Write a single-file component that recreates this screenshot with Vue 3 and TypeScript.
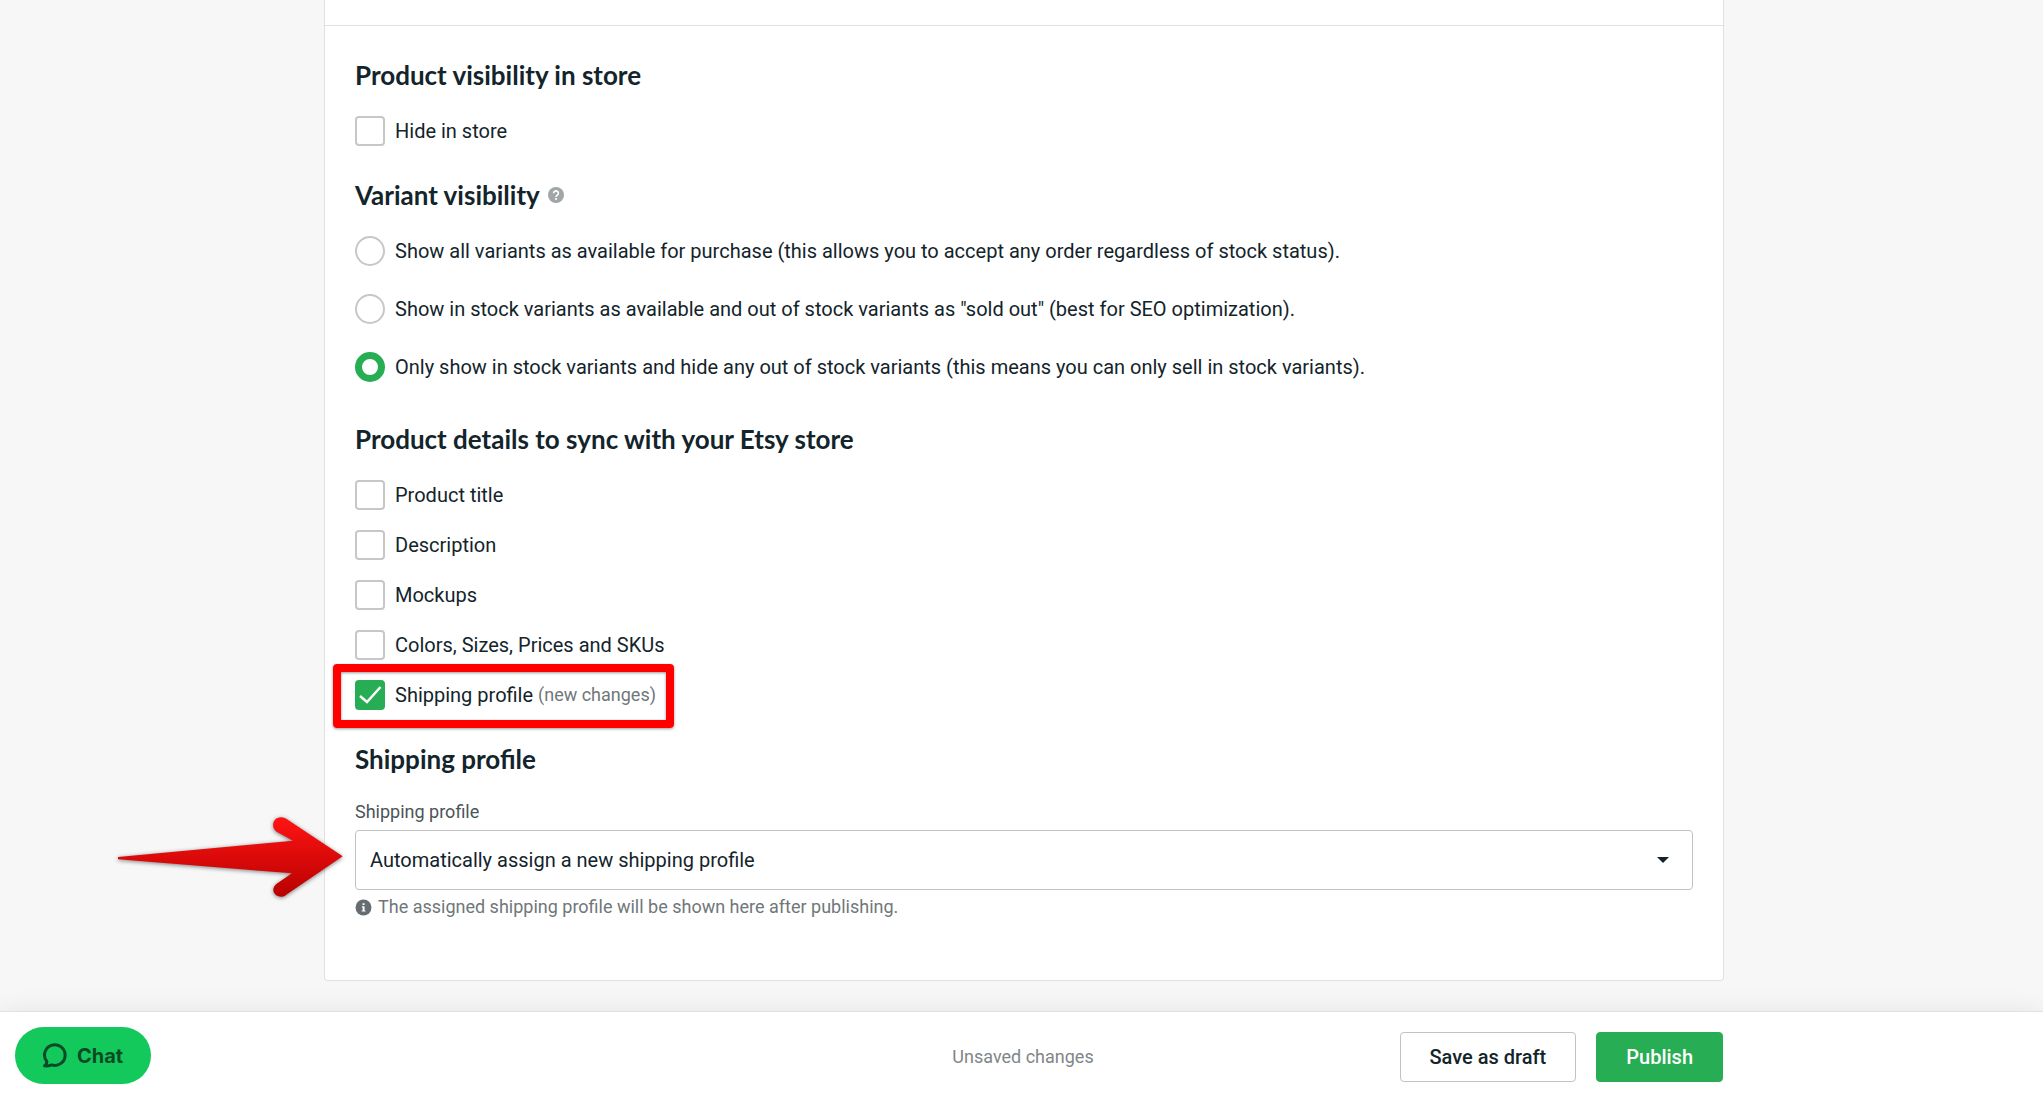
<script setup lang="ts">
import { ref } from 'vue'

interface SyncOption {
  id: string
  label: string
}

interface VisibilityOption {
  value: string
  label: string
}

const hidden = ref(false)
const visibility = ref('in-stock')
const synced = ref<string[]>([])
const shippingSynced = ref(true)
const profile = ref('auto')

const visibilityOptions: VisibilityOption[] = [
  {
    value: 'all',
    label: 'Show all variants as available for purchase (this allows you to accept any order regardless of stock status).',
  },
  {
    value: 'sold-out',
    label: 'Show in stock variants as available and out of stock variants as "sold out" (best for SEO optimization).',
  },
  {
    value: 'in-stock',
    label: 'Only show in stock variants and hide any out of stock variants (this means you can only sell in stock variants).',
  },
]

const syncOptions: SyncOption[] = [
  { id: 'title', label: 'Product title' },
  { id: 'description', label: 'Description' },
  { id: 'mockups', label: 'Mockups' },
  { id: 'variants', label: 'Colors, Sizes, Prices and SKUs' },
]
</script>

<template>
  <div class="page">
    <main class="content">
      <div class="card">
        <div class="card-head"></div>
        <div class="card-body">
          <section>
            <h2>Product visibility in store</h2>
            <label class="option">
              <input v-model="hidden" type="checkbox" class="check" />
              <span>Hide in store</span>
            </label>
          </section>

          <section>
            <h2 id="variant-heading">
              Variant visibility
              <svg class="help" viewBox="0 0 16 16" aria-hidden="true">
                <circle cx="8" cy="8" r="8" fill="#a1a6a7" />
                <path d="M5.600 6.200a2.400 2.300 0 1 1 3.700 1.900C8.400 8.700 8 9 8 9.900" fill="none" stroke="#fff" stroke-width="1.700" />
                <rect x="7.100" y="11" width="1.800" height="1.800" fill="#fff" />
              </svg>
            </h2>
            <div class="radios" role="radiogroup" aria-labelledby="variant-heading">
              <label v-for="o in visibilityOptions" :key="o.value" class="option">
                <input v-model="visibility" type="radio" name="visibility" :value="o.value" class="radio" />
                <span>{{ o.label }}</span>
              </label>
            </div>
          </section>

          <section class="after-radios">
            <h2>Product details to sync with your Etsy store</h2>
            <div class="checks">
              <label v-for="o in syncOptions" :key="o.id" class="option">
                <input v-model="synced" type="checkbox" :value="o.id" class="check" />
                <span>{{ o.label }}</span>
              </label>
              <div class="marked">
                <label class="option">
                  <input v-model="shippingSynced" type="checkbox" class="check" />
                  <span>Shipping profile <small>(new changes)</small></span>
                </label>
                <div class="highlight"></div>
              </div>
            </div>
          </section>

          <section>
            <h2>Shipping profile</h2>
            <label class="field-label" for="shipping-profile">Shipping profile</label>
            <div class="select-box">
              <select id="shipping-profile" v-model="profile">
                <option value="auto">Automatically assign a new shipping profile</option>
              </select>
              <svg class="caret" viewBox="0 0 12 6" aria-hidden="true"><path d="M0 0h12L6 6z" fill="#13242b" /></svg>
              <svg class="arrow" viewBox="0 0 228 84" aria-hidden="true">
                <defs>
                  <linearGradient id="arrow-fill" x1="0" y1="0" x2="0" y2="1">
                    <stop offset="0" stop-color="#ff1414" />
                    <stop offset="1" stop-color="#b80000" />
                  </linearGradient>
                </defs>
                <path
                  d="M1 41L176 24.700L160 16C153 11 156 1.300 164 1.300C167 1.300 168.500 2.300 170 3.300L225.700 40.300L170.300 78C168.500 79.500 167 80.700 164.500 80.700C156 80.700 153.500 72 160 67.500L175 57.300L1 43.300Z"
                  fill="url(#arrow-fill)"
                />
              </svg>
            </div>
            <p class="hint">
              <svg viewBox="0 0 16 16" aria-hidden="true">
                <circle cx="8" cy="8" r="7.500" fill="#656d71" />
                <path d="M7.100 4h1.900v1.700h-1.900zM6.500 6.900h2.500v3.900h.8v1H6.300v-1h.9V7.900h-.7z" fill="#fff" />
              </svg>
              <span>The assigned shipping profile will be shown here after publishing.</span>
            </p>
          </section>
        </div>
      </div>
    </main>

    <footer class="bar">
      <div class="bar-inner">
        <span></span>
        <span class="status">Unsaved changes</span>
        <div class="actions">
          <button type="button" class="btn">Save as draft</button>
          <button type="button" class="btn primary">Publish</button>
        </div>
      </div>
    </footer>

    <button type="button" class="chat">
      <svg viewBox="0 0 26 26" aria-hidden="true">
        <path
          d="M2.500 22.800C4 21.500 5 20.300 4.900 18.700A10.300 10.300 0 1 1 9.600 21.900C7.500 22.800 5 23.400 2.500 22.800Z"
          fill="none"
          stroke="#0b4a26"
          stroke-width="3"
          stroke-linejoin="round"
        />
      </svg>
      <span>Chat</span>
    </button>
  </div>
</template>

<style>
body {
  margin: 0;
  background: #f7f7f7;
}
</style>

<style scoped>
.page {
  position: relative;
  display: flex;
  flex-direction: column;
  min-height: 100vh;
  overflow: hidden;
  color: #13242b;
  font: 20px/30px Roboto, sans-serif;
}

.content {
  padding: 0 20px 30px 25px;
}

.card {
  box-sizing: border-box;
  max-width: 1400px;
  margin: 0 auto;
  background: #fff;
  border: 1px solid #e0e2e2;
  border-top: 0;
  border-radius: 0 0 4px 4px;
}

.card-head {
  height: 25px;
  border-bottom: 1px solid #e0e2e2;
}

.card-body {
  padding: 34px 30px 61px;
}

section + section {
  margin-top: 34px;
}

section.after-radios {
  margin-top: 42px;
}

h2 {
  display: flex;
  align-items: center;
  gap: 8px;
  margin: 0 0 26px;
  font: 700 26px/30px Lato, sans-serif;
}

.help {
  width: 16px;
  height: 16px;
}

.option {
  display: flex;
  align-items: center;
  gap: 10px;
}

.radios {
  display: grid;
  gap: 28px;
}

.checks {
  display: grid;
  gap: 20px;
}

.check,
.radio {
  appearance: none;
  flex: none;
  box-sizing: border-box;
  width: 30px;
  height: 30px;
  margin: 0;
  background: #fff;
  border: 2px solid #c4c8c9;
}

.check {
  border-radius: 4px;
}

.radio {
  border-radius: 50%;
}

.check:checked {
  border: 0;
  background: #27ad53
    url("data:image/svg+xml,%3Csvg xmlns='http://www.w3.org/2000/svg' viewBox='0 0 30 30'%3E%3Cpath d='M5 16l7 6L25.500 7' fill='none' stroke='%23fff' stroke-width='2.500'/%3E%3C/svg%3E");
}

.radio:checked {
  border: 7px solid #27ad53;
}

small {
  color: #6f777a;
  font-size: 18px;
  line-height: 20px;
  vertical-align: 1px;
}

.marked {
  position: relative;
}

.highlight {
  position: absolute;
  box-sizing: border-box;
  top: -16px;
  left: -22px;
  width: 341px;
  height: 64px;
  border: 8px solid #f00;
  border-radius: 4px;
  box-shadow: 0 1px 3px rgba(0, 0, 0, 0.4), inset 0 1px 3px rgba(0, 0, 0, 0.4);
  pointer-events: none;
}

.field-label {
  display: block;
  margin-bottom: 6px;
  color: #4a5559;
  font-size: 18px;
  line-height: 24px;
}

.select-box {
  position: relative;
}

select {
  appearance: none;
  display: block;
  box-sizing: border-box;
  width: 100%;
  height: 60px;
  padding: 0 50px 0 14px;
  color: inherit;
  font: inherit;
  background: #fff;
  border: 1px solid #bfc3c4;
  border-radius: 4px;
}

.caret {
  position: absolute;
  top: 27px;
  right: 24px;
  width: 12px;
  height: 6px;
  pointer-events: none;
}

.arrow {
  position: absolute;
  top: -14px;
  left: -238px;
  width: 228px;
  height: 84px;
  overflow: visible;
  filter: drop-shadow(0 1px 2px rgba(0, 0, 0, 0.5));
  pointer-events: none;
}

.hint {
  display: flex;
  align-items: center;
  gap: 6px;
  margin: 5px 0 0;
  color: #6f777a;
  font-size: 18px;
  line-height: 24px;
}

.hint svg {
  width: 17px;
  height: 17px;
}

.bar {
  position: relative;
  margin-top: auto;
  padding: 20px 22px 15px 25px;
  background: #fff;
  border-top: 1px solid #e0e2e2;
  box-shadow: 0 0 24px rgba(0, 0, 0, 0.08);
}

.bar-inner {
  display: grid;
  grid-template-columns: 1fr auto 1fr;
  align-items: center;
  max-width: 1400px;
  margin: 0 auto;
}

.status {
  color: #7f8689;
  font-size: 18px;
  line-height: 24px;
}

.actions {
  display: flex;
  justify-content: flex-end;
  gap: 20px;
}

.btn {
  box-sizing: border-box;
  height: 50px;
  padding: 0 29px;
  color: #13242b;
  font: 500 20px/30px Roboto, sans-serif;
  background: #fff;
  border: 1px solid #bfc3c4;
  border-radius: 4px;
}

.btn.primary {
  color: #fff;
  background: #27ad53;
  border-color: #27ad53;
}

.chat {
  position: absolute;
  bottom: 13px;
  left: 15px;
  display: flex;
  align-items: center;
  gap: 9px;
  height: 57px;
  padding: 0 28px 0 27px;
  color: #0b4a26;
  font: 700 20px/24px Inter, sans-serif;
  background: #13c95b;
  border: 0;
  border-radius: 29px;
}

.chat svg {
  width: 26px;
  height: 26px;
}
</style>
